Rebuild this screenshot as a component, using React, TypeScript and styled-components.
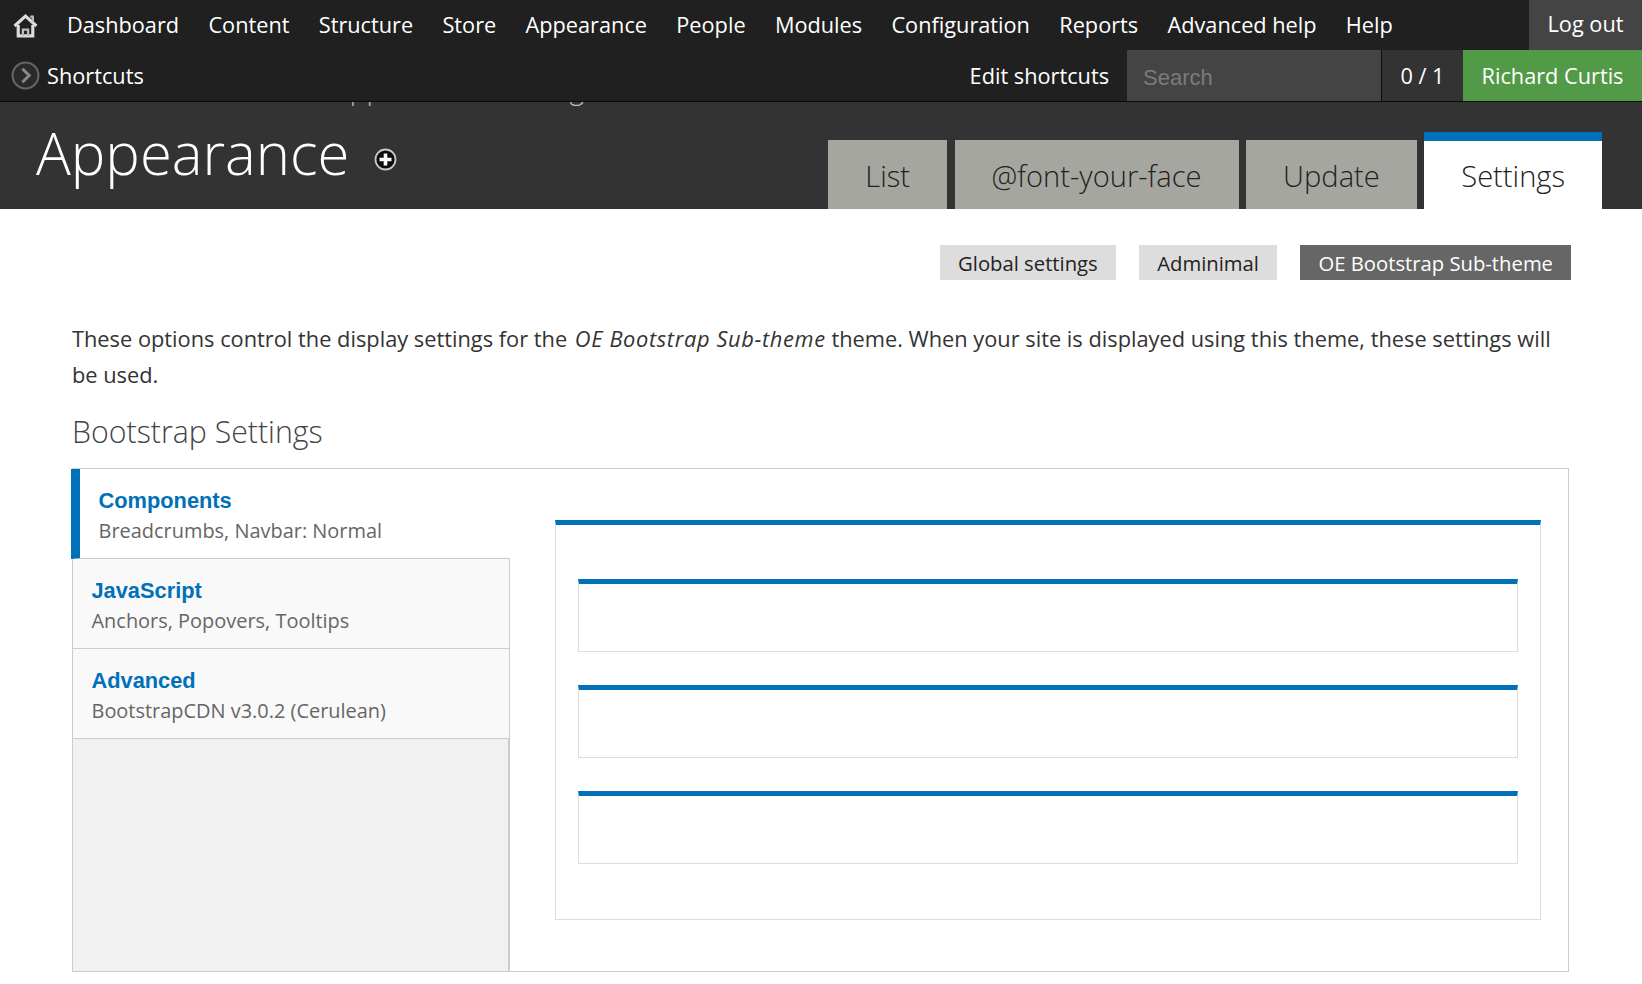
import styled, { createGlobalStyle } from 'styled-components';

const GlobalStyle = createGlobalStyle`
  html, body {
    margin: 0;
    padding: 0;
    background: #fff;
    font-family: "Open Sans", "Liberation Sans", sans-serif;
  }
  * {
    box-sizing: border-box;
  }
`;

const Toolbar = styled.div`
  background: #202020;
  border-bottom: 1px solid #0c0c0c;
  color: #fff;
  font-size: 21.73px;
`;

const MenuRow = styled.nav`
  display: flex;
  align-items: center;
  height: 50px;
`;

const HomeLink = styled.a`
  display: flex;
  width: 67px;
  padding-left: 13px;
`;

const MenuLink = styled.a`
  margin-right: 29.3px;
  line-height: 48px;
`;

const LogOut = styled.a`
  margin-left: auto;
  width: 113px;
  height: 50px;
  background: #444;
  text-align: center;
  line-height: 48px;
`;

const ShortcutRow = styled.div`
  display: flex;
  align-items: center;
  height: 51px;
`;

const ShortcutsToggle = styled.a`
  display: flex;
  align-items: center;
  gap: 7px;
  padding-left: 11px;
`;

const EditLink = styled.a`
  margin-left: auto;
  margin-right: 18px;
`;

const SearchBox = styled.div`
  width: 254px;
  height: 51px;
  padding-left: 16px;
  background: #444;
  color: #7b7b7b;
  font-family: "Liberation Sans", sans-serif;
  font-size: 22px;
  line-height: 55px;
`;

const Counter = styled.div`
  width: 82px;
  height: 51px;
  border-left: 1px solid #0c0c0c;
  background: #333;
  text-align: center;
  line-height: 52px;
`;

const UserName = styled.a`
  width: 179px;
  height: 51px;
  background: #529a47;
  text-align: center;
  line-height: 52px;
`;

const Header = styled.header`
  position: relative;
  display: flex;
  align-items: flex-end;
  justify-content: space-between;
  height: 107px;
  padding: 0 40px 0 36px;
  background: #333;
`;

const HiddenCrumb = styled.div`
  position: absolute;
  top: 0;
  left: 333px;
  height: 4px;
  overflow: hidden;
  color: #bbb;
  font-size: 28px;
  font-weight: 300;
  line-height: 28px;
  word-spacing: 8px;
  white-space: nowrap;

  span {
    display: block;
    margin-top: -28px;
  }
`;

const TitleWrap = styled.div`
  display: flex;
  align-items: center;
  align-self: flex-start;
  gap: 25px;
  padding-top: 11px;
`;

const Title = styled.h1`
  margin: 0;
  color: #fff;
  font-size: 58px;
  font-weight: 300;
  line-height: 80px;
`;

const PlusMark = styled.span`
  display: flex;
  margin-top: 12px;
`;

const Tabs = styled.div`
  display: flex;
  align-items: flex-end;
  gap: 7.5px;
`;

const Tab = styled.a<{ $active?: boolean }>`
  display: block;
  height: ${({ $active }) => ($active ? '77px' : '69px')};
  padding: 0 37px;
  border-top: ${({ $active }) => ($active ? '9px solid #0071b8' : '0')};
  background: ${({ $active }) => ($active ? '#fff' : '#a6a6a0')};
  color: #222;
  font-size: 29.1px;
  font-weight: 300;
  line-height: ${({ $active }) => ($active ? '70px' : '72px')};
`;

const Main = styled.main`
  padding: 36px 71px 0 72px;
`;

const SecondaryTabs = styled.div`
  display: flex;
  justify-content: flex-end;
  gap: 23.5px;
`;

const SecondaryTab = styled.a<{ $active?: boolean }>`
  height: 35px;
  padding: 0 18px;
  background: ${({ $active }) => ($active ? '#666' : '#ddd')};
  color: ${({ $active }) => ($active ? '#fff' : '#222')};
  font-size: 20.25px;
  line-height: 36px;
`;

const Intro = styled.p`
  margin: 41px 0 0;
  color: #333;
  font-size: 21.8px;
  line-height: 35.6px;

  em {
    margin-left: 2px;
    letter-spacing: 0.65px;
  }
`;

const SectionTitle = styled.h2`
  margin: 18px 0 0;
  color: #444;
  font-size: 30.3px;
  font-weight: 300;
  line-height: 44px;
`;

const SettingsBox = styled.div`
  display: flex;
  height: 504px;
  margin: 14px 2px 0 0;
  border: 1px solid #ccc;
`;

const VerticalTabs = styled.div`
  display: flex;
  flex-direction: column;
  flex: none;
  width: 437px;
`;

const VerticalTab = styled.a<{ $active?: boolean }>`
  display: block;
  height: 90px;
  margin-left: ${({ $active }) => ($active ? '-2px' : '0')};
  padding: ${({ $active }) => ($active ? '18px 0 0 18.5px' : '18px 0 0 18.5px')};
  border-left: ${({ $active }) => ($active ? '9px solid #0071b8' : '0')};
  border-right: ${({ $active }) => ($active ? '0' : '1px solid #ccc')};
  border-bottom: 1px solid #ccc;
  background: ${({ $active }) => ($active ? '#fff' : '#f9f9f9')};
`;

const TabsFiller = styled.div`
  flex: 1;
  background: #f1f1f1;
  border-right: 2px solid #ccc;
`;

const TabTitle = styled.strong`
  display: block;
  color: #0071b8;
  font-family: "Liberation Sans", sans-serif;
  font-size: 21.8px;
  line-height: 28px;
`;

const TabSummary = styled.span`
  display: block;
  color: #666;
  font-size: 19.95px;
  line-height: 32px;
`;

const Pane = styled.div`
  flex: 1;
  padding: 51px 27px 0 45px;
`;

const OuterFieldset = styled.div`
  height: 400px;
  padding: 54px 22px 0;
  border: 1px solid #ddd;
  border-top: 5px solid #0071b8;
`;

const InnerFieldset = styled.div`
  height: 73px;
  margin-bottom: 33px;
  border: 1px solid #ddd;
  border-top: 5px solid #0071b8;
`;

const HomeIcon = () => (
  <svg width="25" height="25" viewBox="0 0 24 24" fill="none">
    <path d="M1.500 12.500 12 3l10.500 9.500" stroke="#ddd" strokeWidth="3" />
    <path d="M16.500 3.500h2.500v5" stroke="#bbb" strokeWidth="2.200" />
    <path d="M5 11.500V22h14V11.500" stroke="#ddd" strokeWidth="3" />
    <path d="M9.500 22v-6h5v6" stroke="#bbb" strokeWidth="2.200" />
  </svg>
);

const ChevronCircleIcon = () => (
  <svg width="29" height="29" viewBox="0 0 28 28">
    <circle cx="14" cy="14" r="12.500" fill="#2a2a2a" stroke="#666" strokeWidth="2" />
    <path d="m11 7.500 6.500 6.500-6.500 6.500" fill="none" stroke="#888" strokeWidth="3" />
  </svg>
);

const PlusIcon = () => (
  <svg width="23" height="23" viewBox="0 0 23 23">
    <circle cx="11.500" cy="11.500" r="10" fill="#0c0c0c" stroke="#c8c8c8" strokeWidth="1.800" />
    <path d="M11.500 5.500v12M5.500 11.500h12" stroke="#fff" strokeWidth="3.600" />
  </svg>
);

const menuItems = [
  'Dashboard',
  'Content',
  'Structure',
  'Store',
  'Appearance',
  'People',
  'Modules',
  'Configuration',
  'Reports',
  'Advanced help',
  'Help',
];

const tabs = ['List', '@font-your-face', 'Update'];

const verticalTabs = [
  { title: 'Components', summary: 'Breadcrumbs, Navbar: Normal' },
  { title: 'JavaScript', summary: 'Anchors, Popovers, Tooltips' },
  { title: 'Advanced', summary: 'BootstrapCDN v3.0.2 (Cerulean)' },
];

export default function App() {
  return (
    <>
      <GlobalStyle />
      <Toolbar>
        <MenuRow>
          <HomeLink>
            <HomeIcon />
          </HomeLink>
          {menuItems.map((item) => (
            <MenuLink key={item}>{item}</MenuLink>
          ))}
          <LogOut>Log out</LogOut>
        </MenuRow>
        <ShortcutRow>
          <ShortcutsToggle>
            <ChevronCircleIcon />
            Shortcuts
          </ShortcutsToggle>
          <EditLink>Edit shortcuts</EditLink>
          <SearchBox>Search</SearchBox>
          <Counter>0 / 1</Counter>
          <UserName>Richard Curtis</UserName>
        </ShortcutRow>
      </Toolbar>
      <Header>
        <HiddenCrumb>
          <span>Appearance settings</span>
        </HiddenCrumb>
        <TitleWrap>
          <Title>Appearance</Title>
          <PlusMark>
            <PlusIcon />
          </PlusMark>
        </TitleWrap>
        <Tabs>
          {tabs.map((tab) => (
            <Tab key={tab}>{tab}</Tab>
          ))}
          <Tab $active>Settings</Tab>
        </Tabs>
      </Header>
      <Main>
        <SecondaryTabs>
          <SecondaryTab>Global settings</SecondaryTab>
          <SecondaryTab>Adminimal</SecondaryTab>
          <SecondaryTab $active>OE Bootstrap Sub-theme</SecondaryTab>
        </SecondaryTabs>
        <Intro>
          These options control the display settings for the <em>OE Bootstrap Sub-theme</em> theme.
          When your site is displayed using this theme, these settings will be used.
        </Intro>
        <SectionTitle>Bootstrap Settings</SectionTitle>
        <SettingsBox>
          <VerticalTabs>
            {verticalTabs.map((tab, i) => (
              <VerticalTab key={tab.title} $active={i === 0}>
                <TabTitle>{tab.title}</TabTitle>
                <TabSummary>{tab.summary}</TabSummary>
              </VerticalTab>
            ))}
            <TabsFiller />
          </VerticalTabs>
          <Pane>
            <OuterFieldset>
              <InnerFieldset />
              <InnerFieldset />
              <InnerFieldset />
            </OuterFieldset>
          </Pane>
        </SettingsBox>
      </Main>
    </>
  );
}
